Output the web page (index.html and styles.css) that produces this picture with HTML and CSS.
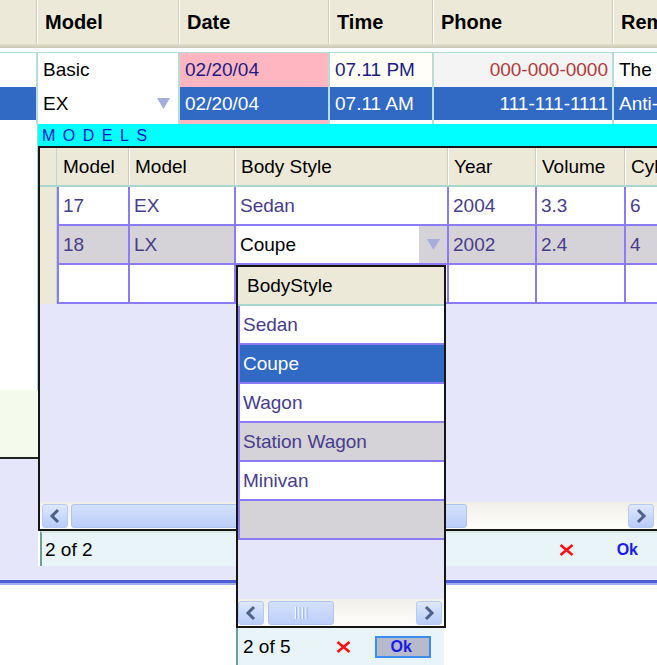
FILE: index.html
```html
<!DOCTYPE html>
<html>
<head>
<meta charset="utf-8">
<link rel="stylesheet" href="styles.css">
</head>
<body>
<div class="page">
  <div class="o-head">
    <div class="hc c-sel"></div>
    <div class="hc c-model">Model</div>
    <div class="hc c-date">Date</div>
    <div class="hc c-time">Time</div>
    <div class="hc c-phone">Phone</div>
    <div class="hc c-rem">Remarks</div>
  </div>
  <div class="o-shade"></div>
  <div class="o-gap"></div>
  <div class="o-row r1">
    <div class="od c-sel first"></div>
    <div class="od c-model">Basic</div>
    <div class="od c-date pink navy">02/20/04</div>
    <div class="od c-time cream navy">07.11 PM</div>
    <div class="od c-phone lgray red num">000-000-0000</div>
    <div class="od c-rem">The</div>
  </div>
  <div class="o-row r2">
    <div class="od c-sel first sel"></div>
    <div class="od c-model edit">EX
      <svg class="dd-arrow" width="13" height="11" viewBox="0 0 13 11"><polygon points="0,0 13,0 6.5,11" fill="#A4ADDC"/></svg>
    </div>
    <div class="od c-date sel">02/20/04</div>
    <div class="od c-time sel">07.11 AM</div>
    <div class="od c-phone sel num">111-111-1111</div>
    <div class="od c-rem sel">Anti-lock</div>
  </div>
  <div class="o-row strip">
    <div class="od c-sel first"></div>
    <div class="od c-model"></div>
    <div class="od c-date pink"></div>
    <div class="od c-time"></div>
    <div class="od c-phone"></div>
    <div class="od c-rem"></div>
  </div>

  <div class="detail">
    <div class="lcol">
      <div class="l-white"></div>
      <div class="l-green"></div>
      <div class="l-line"></div>
      <div class="l-fill"></div>
    </div>
    <div class="rcol">
      <div class="models">MODELS</div>
      <div class="child">
        <div class="ch-head">
          <div class="cs"></div>
          <div class="chc w-m1">Model</div>
          <div class="chc w-m2">Model</div>
          <div class="chc w-body">Body Style</div>
          <div class="chc w-year">Year</div>
          <div class="chc w-vol">Volume</div>
          <div class="chc w-cyl">Cylinders</div>
        </div>
        <div class="ch-row">
          <div class="cs"></div>
          <div class="cd w-m1">17</div>
          <div class="cd w-m2">EX</div>
          <div class="cd w-body">Sedan</div>
          <div class="cd w-year">2004</div>
          <div class="cd w-vol">3.3</div>
          <div class="cd w-cyl">6</div>
        </div>
        <div class="ch-row gray">
          <div class="cs"></div>
          <div class="cd w-m1">18</div>
          <div class="cd w-m2">LX</div>
          <div class="cd w-body editing"><span>Coupe</span>
            <div class="cell-btn"><svg width="13" height="11" viewBox="0 0 13 11"><polygon points="0,0 13,0 6.5,11" fill="#A4ADDC"/></svg></div>
          </div>
          <div class="cd w-year">2002</div>
          <div class="cd w-vol">2.4</div>
          <div class="cd w-cyl">4</div>
        </div>
        <div class="ch-row">
          <div class="cs"></div>
          <div class="cd w-m1"></div>
          <div class="cd w-m2"></div>
          <div class="cd w-body"></div>
          <div class="cd w-year"></div>
          <div class="cd w-vol"></div>
          <div class="cd w-cyl"></div>
        </div>
        <div class="ch-fill"></div>
        <div class="hscroll child-scroll">
          <div class="sb-btn"><svg width="12" height="16" viewBox="0 0 12 16"><polyline points="9,2 3,8 9,14" fill="none" stroke="#4D6185" stroke-width="3"/></svg></div>
          <div class="sb-thumb big"></div>
          <div class="sb-track"></div>
          <div class="sb-btn"><svg width="12" height="16" viewBox="0 0 12 16"><polyline points="3,2 9,8 3,14" fill="none" stroke="#4D6185" stroke-width="3"/></svg></div>
        </div>
      </div>
      <div class="status">
        <span class="count">2 of 2</span>
        <svg class="xicon" width="15" height="12" viewBox="0 0 15 12"><path d="M1.5 1 L13.5 11 M13.5 1 L1.5 11" stroke="#FF1010" stroke-width="2.6"/></svg>
        <span class="ok-text">Ok</span>
      </div>
      <div class="r-fill"></div>
    </div>
  </div>
  <div class="bottom-line"></div>

  <div class="dd">
    <div class="dd-box">
      <div class="dd-head">BodyStyle</div>
      <div class="dr">Sedan</div>
      <div class="dr on">Coupe</div>
      <div class="dr">Wagon</div>
      <div class="dr gray">Station Wagon</div>
      <div class="dr">Minivan</div>
      <div class="dr gray"></div>
      <div class="dd-fill"></div>
      <div class="hscroll dd-scroll">
        <div class="sb-btn"><svg width="12" height="16" viewBox="0 0 12 16"><polyline points="9,2 3,8 9,14" fill="none" stroke="#4D6185" stroke-width="3"/></svg></div>
        <div class="sb-thumb small"><svg width="14" height="12" viewBox="0 0 14 12"><path d="M1.5 0V12M5 0V12M8.5 0V12M12 0V12" stroke="#F4F8FF" stroke-width="1.2"/><path d="M2.6 0V12M6.1 0V12M9.6 0V12M13.1 0V12" stroke="#9CB4EC" stroke-width="1"/></svg></div>
        <div class="sb-track"></div>
        <div class="sb-btn"><svg width="12" height="16" viewBox="0 0 12 16"><polyline points="3,2 9,8 3,14" fill="none" stroke="#4D6185" stroke-width="3"/></svg></div>
      </div>
    </div>
    <div class="dd-status">
      <span class="count">2 of 5</span>
      <svg class="xicon2" width="15" height="12" viewBox="0 0 15 12"><path d="M1.5 1 L13.5 11 M13.5 1 L1.5 11" stroke="#FF1010" stroke-width="2.6"/></svg>
      <span class="ok-btn">Ok</span>
    </div>
  </div>
</div>
</body>
</html>
```

FILE: styles.css
```css
* { box-sizing: border-box; }
body {
  margin: 0;
  background: #fff;
  font-family: "Liberation Sans", Arial, sans-serif;
  font-size: 19px;
  color: #000;
}
.page {
  position: relative;
  width: 657px;
  height: 665px;
  overflow: hidden;
  white-space: nowrap;
}

/* outer grid */
.o-head {
  display: flex;
  height: 44px;
  background: #ECE9D8;
}
.hc {
  flex: none;
  font-weight: bold;
  font-size: 20px;
  line-height: 44px;
  padding-left: 8px;
  border-left: 1px solid #D2CEBD;
  box-shadow: inset 1px 0 0 #FFFFFF;
  overflow: hidden;
}
.hc.c-sel { border-left: none; box-shadow: none; }
.o-shade {
  height: 4px;
  background: linear-gradient(#E4E0CF, #C9C5B3);
}
.o-gap { height: 4px; }

.c-sel { width: 36px; }
.c-model { width: 142px; }
.c-date { width: 150px; }
.c-time { width: 104px; }
.c-phone { width: 180px; }
.c-rem { width: 120px; }

.o-row { display: flex; }
.r1 { height: 35px; border-top: 1px solid #B4DCD6; }
.r2 { height: 33px; }
.strip { height: 4px; }
.od {
  flex: none;
  display: flex;
  align-items: center;
  padding-left: 5px;
  border-left: 2px solid #B4DED7;
  overflow: hidden;
}
.od.first { border-left: none; }
.pink { background: #FFB6C1; }
.cream { background: #FFFFF7; }
.lgray { background: #F4F4F4; }
.navy { color: #1C1C84; }
.red { color: #B13A3A; }
.num { justify-content: flex-end; padding-right: 4px; }
.sel { background: #316AC5; color: #fff; }
.edit { position: relative; }
.dd-arrow { margin-left: auto; margin-right: 8px; }

/* detail area */
.detail {
  display: flex;
  height: 456px;
}
.lcol {
  width: 38px;
  flex: none;
  display: flex;
  flex-direction: column;
}
.l-white { height: 266px; background: #fff; border-right: 1px solid #A9D7CF; }
.l-green { height: 67px; background: #F4FAEC; }
.l-line { height: 2px; background: #222; }
.l-fill { flex: 1; background: #E6E6FA; }

.rcol {
  width: 619px;
  flex: none;
  display: flex;
  flex-direction: column;
  overflow: hidden;
}
.models {
  height: 22px;
  background: #00FFFF;
  color: #1414C8;
  font-size: 16px;
  letter-spacing: 7.5px;
  line-height: 24px;
  padding-left: 4px;
}
.child {
  width: 622px;
  height: 385px;
  border: 2px solid #161616;
  display: flex;
  flex-direction: column;
  overflow: hidden;
  flex: none;
}
.ch-head {
  display: flex;
  height: 39px;
  background: #ECE9D8;
  border-bottom: 2px solid #A9D7CF;
  flex: none;
}
.cs {
  width: 17px;
  flex: none;
  background: #ECE9D8;
  border-right: 1px solid #BCD9CF;
}
.chc {
  flex: none;
  line-height: 37px;
  padding-left: 6px;
  border-left: 1px solid #D2CEBD;
  box-shadow: inset 1px 0 0 #fff;
}
.ch-head .chc.w-m1 { border-left: none; box-shadow: none; }
.w-m1 { width: 71px; }
.w-m2 { width: 106px; }
.w-body { width: 213px; }
.w-year { width: 88px; }
.w-vol { width: 89px; }
.w-cyl { width: 80px; }

.ch-row { display: flex; height: 39px; flex: none; }
.cd {
  flex: none;
  line-height: 37px;
  padding-left: 4px;
  color: #483D8B;
  background: #fff;
  border-left: 2px solid #8B7BF5;
  border-bottom: 2px solid #8B7BF5;
}
.ch-row.gray .cd { background: #D5D2D8; }
.ch-row.gray .cd.editing {
  background: #fff;
  color: #000;
  display: flex;
  padding-right: 0;
}
.cell-btn {
  margin-left: auto;
  width: 28px;
  height: 37px;
  background: #D5D2D8;
  display: flex;
  align-items: center;
  justify-content: center;
}
.ch-fill { flex: 1; background: #E6E6FA; }

.hscroll {
  height: 27px;
  flex: none;
  display: flex;
  align-items: center;
  background: linear-gradient(#F1EFE8, #FEFEFB);
}
.child-scroll { padding: 0 4px 0 2px; }
.sb-btn {
  width: 26px;
  height: 24px;
  flex: none;
  border: 1px solid #B6CAF4;
  border-radius: 3px;
  background: linear-gradient(#DEE8FE, #B8CCF8);
  display: flex;
  align-items: center;
  justify-content: center;
}
.sb-thumb {
  flex: none;
  height: 24px;
  margin-left: 3px;
  border: 1px solid #AEC4F2;
  border-radius: 3px;
  background: linear-gradient(#D4E0FC, #BCCFF9);
  display: flex;
  align-items: center;
  justify-content: center;
}
.sb-thumb.big { width: 396px; }
.sb-thumb.small { width: 66px; margin-left: 4px; }
.sb-track { flex: 1; }

.status {
  height: 35px;
  flex: none;
  margin-left: 2px;
  background: #E8F4F8;
  border-left: 2px solid #6E9E98;
  border-top: 2px solid #D8E8E6;
  display: flex;
  align-items: center;
  padding-left: 3px;
}
.xicon { margin-left: auto; }
.ok-text {
  margin-left: 43px;
  margin-right: 19px;
  color: #1A1AE8;
  font-weight: bold;
  font-size: 16px;
}
.r-fill { flex: 1; background: #E6E6FA; }
.bottom-line {
  height: 5px;
  background: linear-gradient(#4E5ED2 0, #4E5ED2 60%, #A4B0EE 60%, #A4B0EE 100%);
}

/* dropdown overlay */
.dd {
  position: absolute;
  left: 236px;
  top: 265px;
  width: 210px;
}
.dd-box {
  height: 363px;
  border: 2px solid #151515;
  background: #E6E6FA;
  display: flex;
  flex-direction: column;
}
.dd-head {
  height: 39px;
  flex: none;
  background: #ECE9D8;
  border-bottom: 2px solid #A9D7CF;
  line-height: 37px;
  padding-left: 9px;
}
.dr {
  height: 39px;
  flex: none;
  line-height: 37px;
  padding-left: 3px;
  color: #483D8B;
  background: #fff;
  border-left: 2px solid #8B7BF5;
  border-bottom: 2px solid #8B7BF5;
}
.dr.on { background: #316AC5; color: #fff; }
.dr.gray { background: #D5D2D8; }
.dd-fill { flex: 1; }
.dd-scroll { padding: 0 2px 0 0; }

.dd-status {
  width: 208px;
  height: 37px;
  background: #E8F4F8;
  border-left: 2px solid #6E9E98;
  display: flex;
  align-items: center;
  padding-left: 5px;
}
.xicon2 { margin-left: 45px; }
.ok-btn {
  margin-left: 24px;
  width: 56px;
  height: 22px;
  border: 2px solid #3A8EF0;
  background: #B6BACB;
  color: #1A1AE8;
  font-weight: bold;
  font-size: 16px;
  line-height: 18px;
  padding-left: 14px;
}
```
